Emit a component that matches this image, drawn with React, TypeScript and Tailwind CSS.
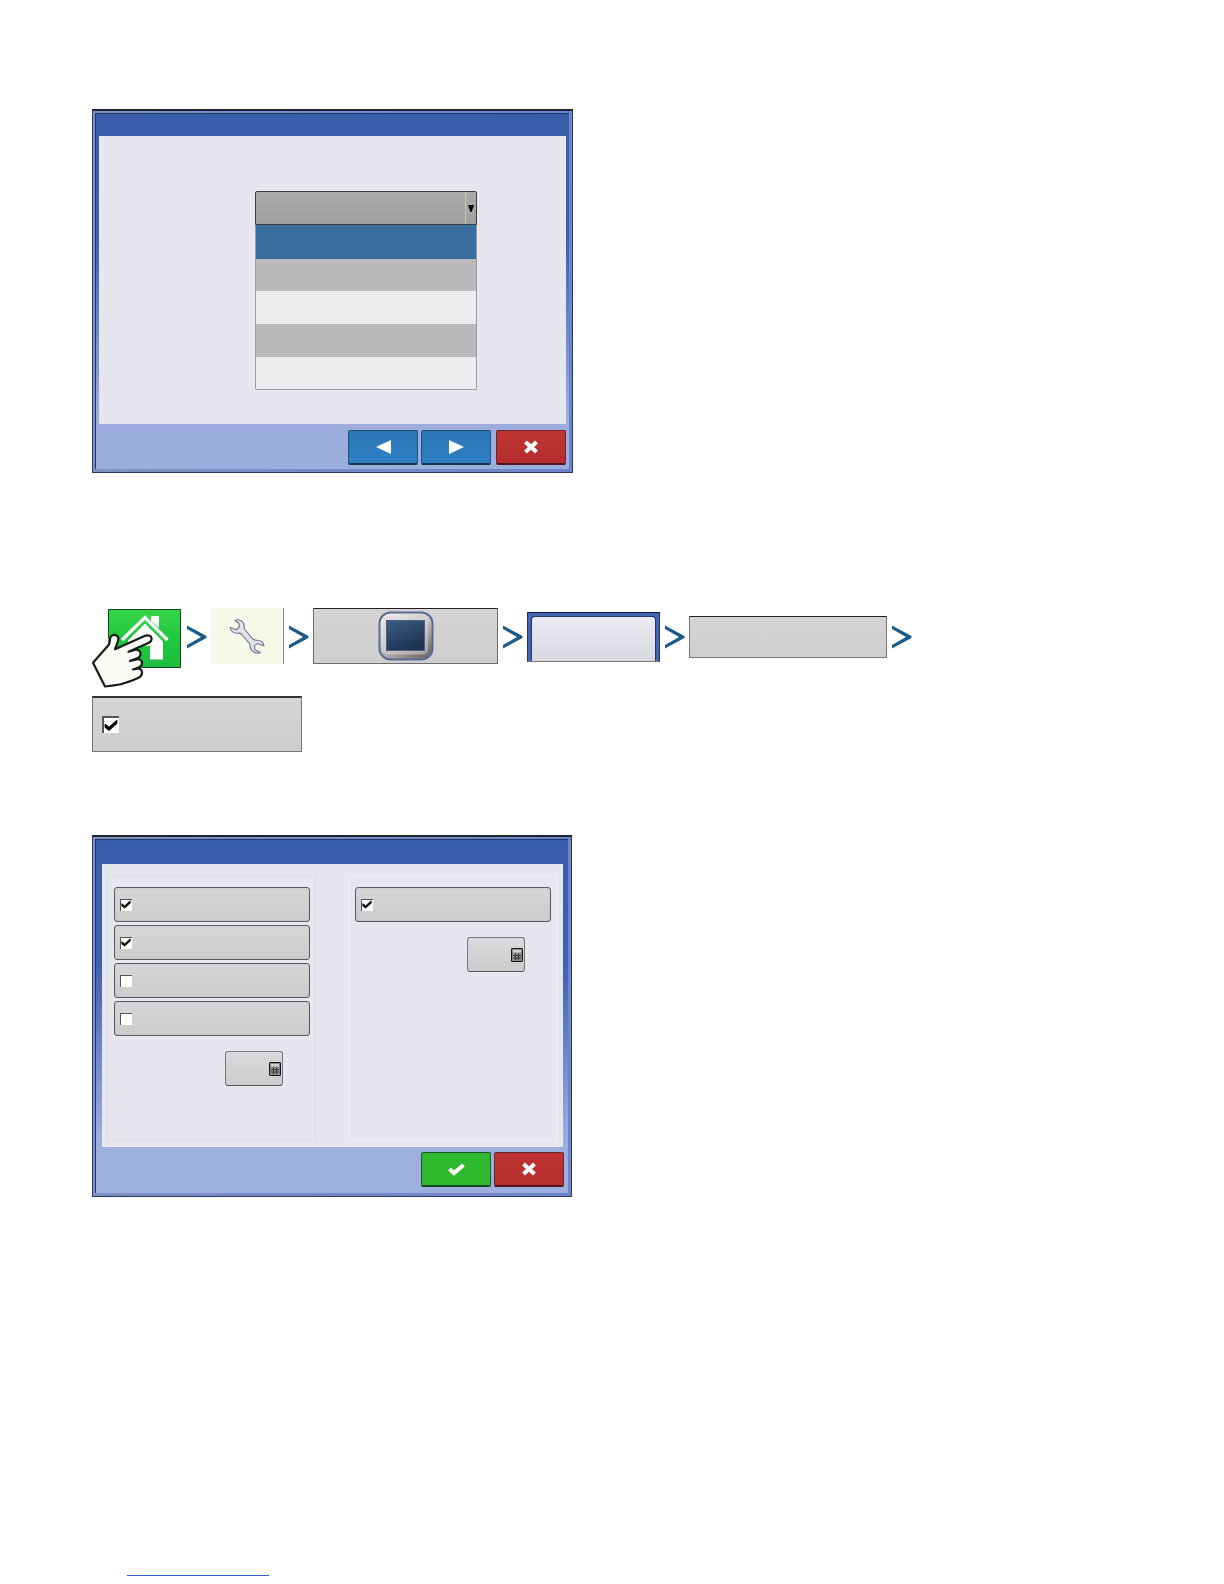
import type { ReactNode } from "react";

type WindowProps = {
  children: ReactNode;
  footer: ReactNode;
  bodyClass: string;
  titleClass: string;
  footerClass: string;
};

function DisplayWindow({ children, footer, bodyClass, titleClass, footerClass }: WindowProps) {
  return (
    <section className="w-full border border-t-2 border-[#2b3768] border-t-[#20222e]">
      <div className="bg-linear-to-r from-[#8090c0] to-[#6c84ca] pt-0.5 pr-[3px] pb-[3px] pl-0.5">
        <div className="border-t border-l border-[#1d3368] bg-linear-to-b from-[#395ea9] from-0% via-[#3f60b0] via-35% to-[#9eaede] to-85%">
          <div className={titleClass} />
          <div className={bodyClass}>{children}</div>
          <div className={footerClass}>{footer}</div>
        </div>
      </div>
    </section>
  );
}

const actionColors = {
  blue: "bg-linear-to-b from-[#2b76b5] to-[#2f80c3] border-[#24507c] border-b-[#173350]",
  green: "bg-[#2eb92f] border-[#1d5c2a] border-b-[#174a20]",
  red: "bg-linear-to-b from-[#be3433] to-[#b42d2c] border-[#6d2733] border-b-[#4d1620]",
};

function ActionButton({ color, label, children }: { color: keyof typeof actionColors; label: string; children: ReactNode }) {
  return (
    <button
      type="button"
      aria-label={label}
      className={`flex h-[35px] w-[70px] items-center justify-center rounded-[2px] border border-b-2 ${actionColors[color]}`}
    >
      {children}
    </button>
  );
}

function CrossIcon() {
  return (
    <svg width="16" height="14" viewBox="0 0 16 14">
      <path d="M2.500 2 13.500 12M13.500 2 2.500 12" stroke="#fff" strokeWidth="4" />
    </svg>
  );
}

function Chevron() {
  return (
    <svg width="21" height="24" viewBox="0 0 21 24" className="shrink-0">
      <path d="M1 0.500 20.500 11v2L1 23.500v-3.500L15 12 1 4z" fill="#1c5a8a" />
    </svg>
  );
}

function HomeWithHand() {
  return (
    <svg width="90" height="80" viewBox="0 0 90 80" className="shrink-0">
      <defs>
        <linearGradient id="homeGreen" x1="0" y1="0" x2="0" y2="1">
          <stop offset="0" stopColor="#36d548" />
          <stop offset="0.5" stopColor="#20c83d" />
          <stop offset="1" stopColor="#1fbb3f" />
        </linearGradient>
      </defs>
      <rect x="16" y="1" width="73" height="59" fill="url(#homeGreen)" />
      <path d="M16.500 30V1.500H88.500V59.500H50" fill="none" stroke="#17422a" />
      <path d="M59 8h8v12l-8-7z" fill="#fff" />
      <path d="M30 32 53 9.500 75.500 32" fill="none" stroke="#fff" strokeWidth="3.200" />
      <path d="M53 15.500 71 33.500V51.500H58V38H36V32.500z" fill="#fff" />
      <path
        d="M1 54.700 17 36.500C18 33.500 17.800 31 18.500 29c1.500-3 7-3 7.900 1.200.3 3.500-2.400 7.300-3.400 11L52.500 28c3-1.300 6.700-.7 7.100 2.300.2 2.400-1 3.600-3.200 4.600L36.500 43.800l6-1.900c3.500-.8 5.800.8 6.100 3.400.2 2.800-1.300 4.200-3.500 4.900L38 53l6.500-1.600c3.200-.6 5.300.8 5.500 3.400.1 2.600-1.400 4.100-3.500 4.800L41 61.500l4.500-.8c2.700-.2 4.400 1.100 4.500 3.500.1 3.200-1.600 5-5 6.300-5 2-9 3.700-13.700 5C26 77.200 19 77.700 13 78.500z"
        fill="#fbfbf5"
        stroke="#161b18"
        strokeWidth="2.200"
        strokeLinejoin="round"
      />
    </svg>
  );
}

function WrenchIcon() {
  return (
    <svg width="36" height="36" viewBox="0 0 36 36">
      <path
        d="M6 2.500C10 .5 15 3 15.200 8c0 1.500 0 2.500.6 3.500l8 9.500c1 1 2 1.200 3.700 1.200 4-.2 7 2 7.500 5.800l-6-2.600-3.600 2.300.6 4 5.500 2.800c-4 1.700-9.500-.5-10.300-5.500-.2-1.500-.2-2.800-1-3.800l-8-9.200c-1-1-2-1-3.400-.8C5 15.300 1.300 13.500 1.200 9.500l5.800 2.300 3.400-2.500-.6-4z"
        fill="#e0e2ec"
        stroke="#70758c"
        strokeWidth="1.100"
        strokeLinejoin="round"
      />
    </svg>
  );
}

function MonitorIcon() {
  return (
    <svg width="56" height="50" viewBox="0 0 56 50">
      <defs>
        <linearGradient id="bezel" x1="0" y1="0" x2="0.700" y2="1">
          <stop offset="0" stopColor="#f6f6f6" />
          <stop offset="0.500" stopColor="#cfcdcd" />
          <stop offset="1" stopColor="#77716f" />
        </linearGradient>
        <linearGradient id="screen" x1="0" y1="0" x2="0.500" y2="1">
          <stop offset="0" stopColor="#3f5f84" />
          <stop offset="1" stopColor="#1c3352" />
        </linearGradient>
      </defs>
      <rect x="1.500" y="1.500" width="53" height="47" rx="11" fill="url(#bezel)" stroke="#5a6d90" strokeWidth="2" />
      <rect x="5" y="5.500" width="45" height="38" rx="5" fill="#d9d6d3" opacity="0.500" />
      <rect x="8.500" y="9.500" width="38" height="30" fill="url(#screen)" stroke="#4c6080" />
    </svg>
  );
}

function CalculatorIcon() {
  return (
    <svg width="12" height="14" viewBox="0 0 12 14" className="shrink-0">
      <rect x="0.500" y="0.500" width="11" height="13" rx="0.500" fill="#8b8b8b" stroke="#151515" />
      <path d="M2 2h8v2.500H2z" fill="#d2d2d2" />
      <path d="M4.500 5.500V12M7.500 5.500V12M2 7.500H10M2 10H10" stroke="#3a3a3a" />
    </svg>
  );
}

function Tick({ checked, large, label }: { checked?: boolean; large?: boolean; label: string }) {
  return (
    <span className="grid">
      <input
        type="checkbox"
        defaultChecked={checked}
        aria-label={label}
        className={`peer col-start-1 row-start-1 appearance-none border-t border-l border-[#555] bg-white ${large ? "size-[17px] border-t-2 border-l-2" : "size-3"}`}
      />
      <svg
        viewBox="0 0 14 12"
        className={`pointer-events-none invisible col-start-1 row-start-1 self-center justify-self-center peer-checked:visible ${large ? "w-[14px]" : "w-[10px]"}`}
      >
        <path d="M1 5 5 8 13 1v3.500L5 11.500 1 8.500z" fill="#000" stroke="#000" strokeWidth="0.800" />
      </svg>
    </span>
  );
}

function OptionRow({ checked, label }: { checked?: boolean; label: string }) {
  return (
    <label className="flex h-[35px] items-center rounded-[3px] border border-[#5c5c62] bg-linear-to-b from-[#d6d5d7] to-[#cccccd] pl-[5px] inset-shadow-[0_0_1px_#8a8a8e]">
      <Tick checked={checked} label={label} />
    </label>
  );
}

function KeypadButton({ label }: { label: string }) {
  return (
    <button
      type="button"
      aria-label={label}
      className="flex h-[35px] w-[58px] items-center justify-end rounded-[3px] border border-[#77777d] border-b-[#55555b] bg-linear-to-b from-[#dad9db] to-[#cccccd] pr-px"
    >
      <CalculatorIcon />
    </button>
  );
}

const listRows = [
  "h-[34px] bg-[#386d9d]",
  "h-8 bg-[#bbb9bc]",
  "h-[33px] bg-[#eeecef]",
  "h-[33px] bg-[#bbb9bc]",
  "h-8 bg-[#eeecef]",
];

export default function App() {
  return (
    <main className="flex min-h-screen flex-col bg-white pt-[109px] pb-2 pl-[92px] font-['Liberation_Sans',sans-serif]">
      <div className="max-w-[481px]">
        <DisplayWindow
          titleClass="h-[22px]"
          bodyClass="mx-[3px] min-h-[288px] bg-[#e5e6ee] pt-[55px] pl-[156px]"
          footerClass="flex justify-end gap-[3px] bg-linear-to-b from-[#9eacde] to-[#9aaedd] pt-1.5 pr-[3px] pb-1"
          footer={
            <>
              <ActionButton color="blue" label="Back">
                <svg width="15" height="14" viewBox="0 0 15 14">
                  <path d="M0 7 15 0v14z" fill="#fff" />
                </svg>
              </ActionButton>
              <ActionButton color="blue" label="Next">
                <svg width="15" height="14" viewBox="0 0 15 14">
                  <path d="M15 7 0 0v14z" fill="#fff" />
                </svg>
              </ActionButton>
              <div className="ml-0.5">
                <ActionButton color="red" label="Cancel">
                  <CrossIcon />
                </ActionButton>
              </div>
            </>
          }
        >
          <div className="w-[222px]">
            <div className="grid">
              <select
                aria-label="Selection"
                className="col-start-1 row-start-1 h-[34px] w-full appearance-none rounded-t-[2px] border border-[#3e3e40] bg-linear-to-b from-[#acabac] to-[#9f9f9f]"
              />
              <span className="pointer-events-none col-start-1 row-start-1 my-px mr-px flex w-[11px] items-center justify-center justify-self-end border-l border-[#c6c6c6]">
                <svg width="6" height="7" viewBox="0 0 6 7" className="shrink-0">
                  <path d="M0 0h6L3.500 7h-1z" fill="#000" />
                </svg>
              </span>
            </div>
            <ul className="rounded-b-[2px] border border-t-0 border-[#9b9b9f]">
              {listRows.map((row, i) => (
                <li key={i} className={row} />
              ))}
            </ul>
          </div>
        </DisplayWindow>
      </div>

      {/* Navigation steps */}
      <nav className="mt-[135px] flex items-start gap-1">
        <HomeWithHand />
        <div className="flex h-[58px] items-center gap-1">
          <Chevron />
          <div className="flex h-14 w-[73px] items-center justify-center self-start border-r border-[#8a8a84] bg-[#f6f8e8]">
            <WrenchIcon />
          </div>
          <Chevron />
          <div className="flex h-14 w-[185px] items-center justify-center self-start border border-[#6c6c6c] border-t-[#222] bg-linear-to-b from-[#d5d3d5] to-[#cfcfcf]">
            <MonitorIcon />
          </div>
          <Chevron />
          <div className="h-[50px] w-[133px] border border-[#23356a] border-t-[#10183a] border-b-[#777] bg-[#4266ad] px-[3px] pt-[3px]">
            <div className="h-full rounded-t-[4px] border border-b-0 border-[#22396f] bg-linear-to-b from-[#ebeaf5] to-[#d9d9e0]" />
          </div>
          <Chevron />
          <div className="h-[42px] w-[198px] border border-[#777] border-t-[#222] bg-linear-to-b from-[#d5d3d5] to-[#cfd0ce]" />
          <Chevron />
        </div>
      </nav>
      <label className="mt-2 flex h-14 w-[210px] items-center border border-[#777] border-t-2 border-t-[#333] bg-linear-to-b from-[#d6d5d6] to-[#cdcdcd] pl-[9px]">
        <Tick checked large label="Enable" />
      </label>

      <div className="mt-[83px] max-w-[480px]">
        <DisplayWindow
          titleClass="h-6"
          bodyClass="mr-[5px] ml-1.5 flex min-h-[283px] justify-between bg-[#e5e6ee] px-[5px] pt-[11px] pb-1.5"
          footerClass="flex justify-end gap-[3px] bg-[#9eaede] pt-[5px] pr-1 pb-1.5"
          footer={
            <>
              <ActionButton color="green" label="Accept">
                <svg width="17" height="13" viewBox="0 0 17 13">
                  <path d="M1.500 6 6 10 15.500 2" fill="none" stroke="#fff" strokeWidth="4" />
                </svg>
              </ActionButton>
              <ActionButton color="red" label="Cancel">
                <CrossIcon />
              </ActionButton>
            </>
          }
        >
          <div className="flex w-[209px] flex-col gap-[3px] border border-[#dcdde3] pt-[11px] pr-[5px] pl-1.5">
            <OptionRow checked label="Option 1" />
            <OptionRow checked label="Option 2" />
            <OptionRow label="Option 3" />
            <OptionRow label="Option 4" />
            <div className="mt-3 flex justify-end pr-[27px]">
              <KeypadButton label="Value 1" />
            </div>
          </div>
          <div className="flex w-[209px] flex-col border border-[#eff0f4] pt-[11px] pr-1.5 pl-[5px]">
            <OptionRow checked label="Option 5" />
            <div className="mt-[15px] flex justify-end pr-[26px]">
              <KeypadButton label="Value 2" />
            </div>
          </div>
        </DisplayWindow>
      </div>

      <a href="#" aria-label="Website" className="mt-auto ml-[35px] h-4 w-[142px] border-b border-[#2f5bd0]" />
    </main>
  );
}
